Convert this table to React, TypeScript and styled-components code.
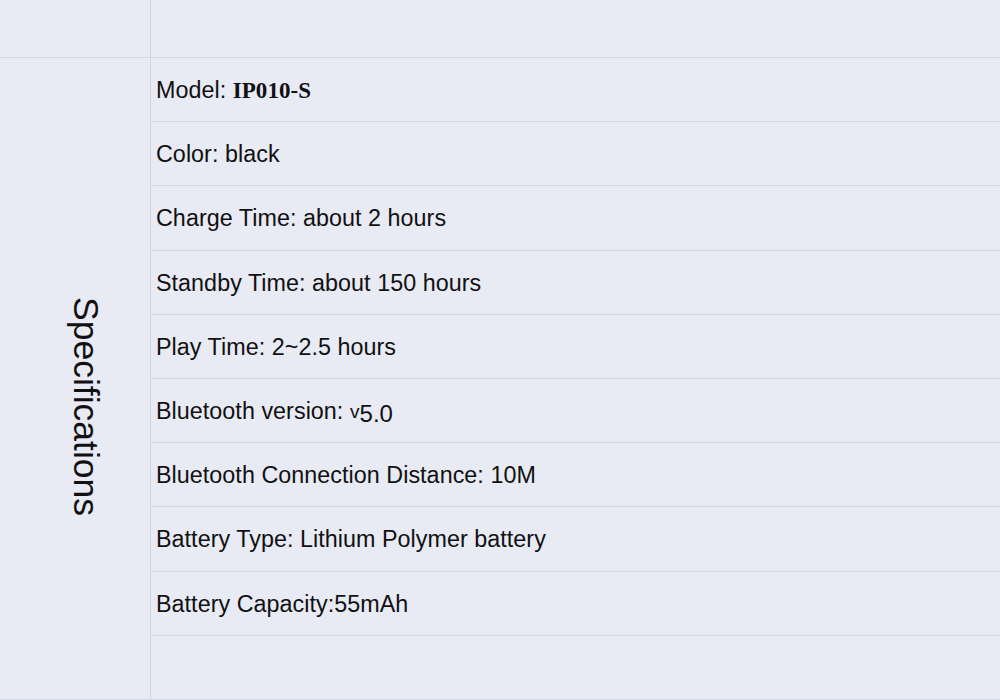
import styled, { createGlobalStyle } from "styled-components";

const Global = createGlobalStyle`
  html, body {
    margin: 0;
    padding: 0;
    background: #e8eaf4;
  }
  body {
    font-family: "Liberation Sans", Arial, sans-serif;
    color: #111;
  }
`;

const Table = styled.div`
  display: grid;
  grid-template-columns: 151px 1fr;
  grid-template-rows: 58px auto;
  width: 1000px;
  height: 700px;
  overflow: hidden;
`;

const Cell = styled.div<{ $top?: boolean }>`
  box-sizing: border-box;
  border-bottom: 1px solid #d2d5e3;
  border-right: ${(p) => (p.$top ? "1px solid #d2d5e3" : "none")};
`;

const Side = styled.div`
  box-sizing: border-box;
  border-right: 1px solid #d2d5e3;
  border-bottom: 1px solid #d2d5e3;
  display: flex;
  align-items: center;
  justify-content: center;
  padding-left: 20px;
  padding-top: 56px;
`;

const SideLabel = styled.div`
  writing-mode: vertical-rl;
  font-size: 35.5px;
  color: #111;
`;

const Rows = styled.div`
  display: flex;
  flex-direction: column;
`;

const Row = styled.div`
  box-sizing: border-box;
  height: 64.2px;
  border-bottom: 1px solid #d2d5e3;
  display: flex;
  align-items: center;
  padding-left: 5px;
  padding-top: 2px;
  font-size: 23.3px;
  letter-spacing: 0.05px;
  white-space: nowrap;
`;

const Serif = styled.span`
  font-family: "Liberation Serif", "Times New Roman", serif;
  font-weight: bold;
  font-size: 23px;
`;

const Small = styled.span`
  font-size: 19px;
`;

const Raised = styled.span`
  position: relative;
  top: 2px;
  font-size: 24px;
`;

const specs = [
  "Color: black",
  "Charge Time: about 2 hours",
  "Standby Time: about 150 hours",
  "Play Time: 2~2.5 hours",
  null,
  "Bluetooth Connection Distance: 10M",
  "Battery Type: Lithium Polymer battery",
  "Battery Capacity:55mAh",
];

export default function App() {
  return (
    <>
      <Global />
      <Table>
        <Cell $top />
        <Cell />
        <Side>
          <SideLabel>Specifications</SideLabel>
        </Side>
        <Rows>
          <Row>
            Model:&nbsp;<Serif>IP010-S</Serif>
          </Row>
          {specs.map((s, i) =>
            s ? (
              <Row key={i}>{s}</Row>
            ) : (
              <Row key={i}>
                Bluetooth version:&nbsp;<Small>v</Small>
                <Raised>5.0</Raised>
              </Row>
            )
          )}
          <Row />
        </Rows>
      </Table>
    </>
  );
}
